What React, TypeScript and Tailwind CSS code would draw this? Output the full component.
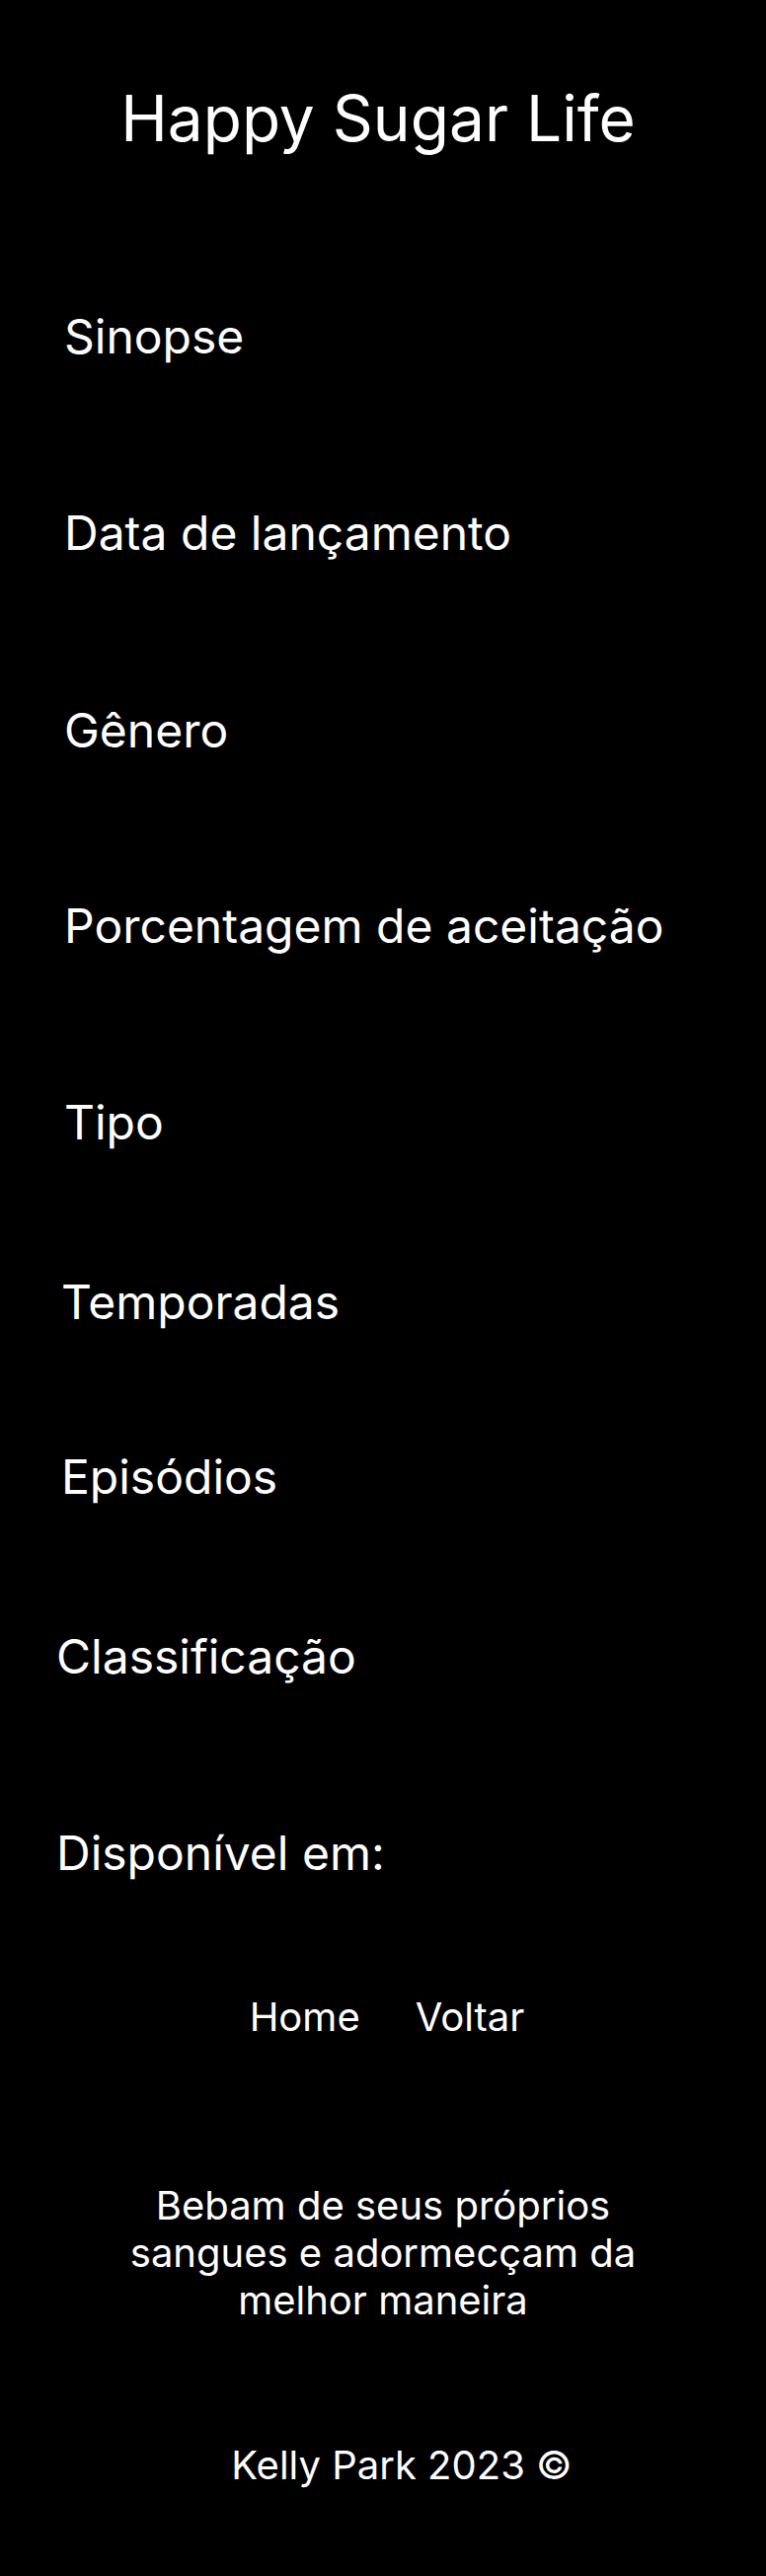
const labels: { text: string; cls: string }[] = [
  { text: "Sinopse", cls: "mt-[165px] pl-[65px]" },
  { text: "Data de lançamento", cls: "mt-[151px] pl-[65px]" },
  { text: "Gênero", cls: "mt-[152px] pl-[65px]" },
  { text: "Porcentagem de aceitação", cls: "mt-[150px] pl-[65px]" },
  { text: "Tipo", cls: "mt-[151px] pl-[65px]" },
  { text: "Temporadas", cls: "mt-[134px] pl-[62px]" },
  { text: "Episódios", cls: "mt-[129px] pl-[62px]" },
  { text: "Classificação", cls: "mt-[134px] pl-[57px]" },
  { text: "Disponível em:", cls: "mt-[151px] pl-[57px]" },
];

export default function App() {
  return (
    <div className="min-h-[2609px] bg-black text-white font-['Inter','Liberation_Sans',sans-serif]">
      <h1 className="pt-[88px] pr-[10px] text-center text-[64px] leading-none font-normal">Happy Sugar Life</h1>

      <main>
        {labels.map(l => (
          <h2 key={l.text} className={`text-[48px] leading-none font-normal ${l.cls}`}>{l.text}</h2>
        ))}
      </main>

      <nav className="mt-[122px] pl-[8px] flex justify-center gap-[56px] text-[40px] leading-none">
        <a href="#">Home</a>
        <a href="#">Voltar</a>
      </nav>

      <footer className="text-center">
        <p className="mt-[147px] text-[40px] leading-[48px]">
          <span className="block">Bebam de seus próprios</span>
          <span className="block">sangues e adormecçam da</span>
          <span className="block">melhor maneira</span>
        </p>
        <p className="mt-[123px] pl-[38px] text-[40px] leading-none">Kelly Park 2023 ©</p>
      </footer>
    </div>
  );
}
